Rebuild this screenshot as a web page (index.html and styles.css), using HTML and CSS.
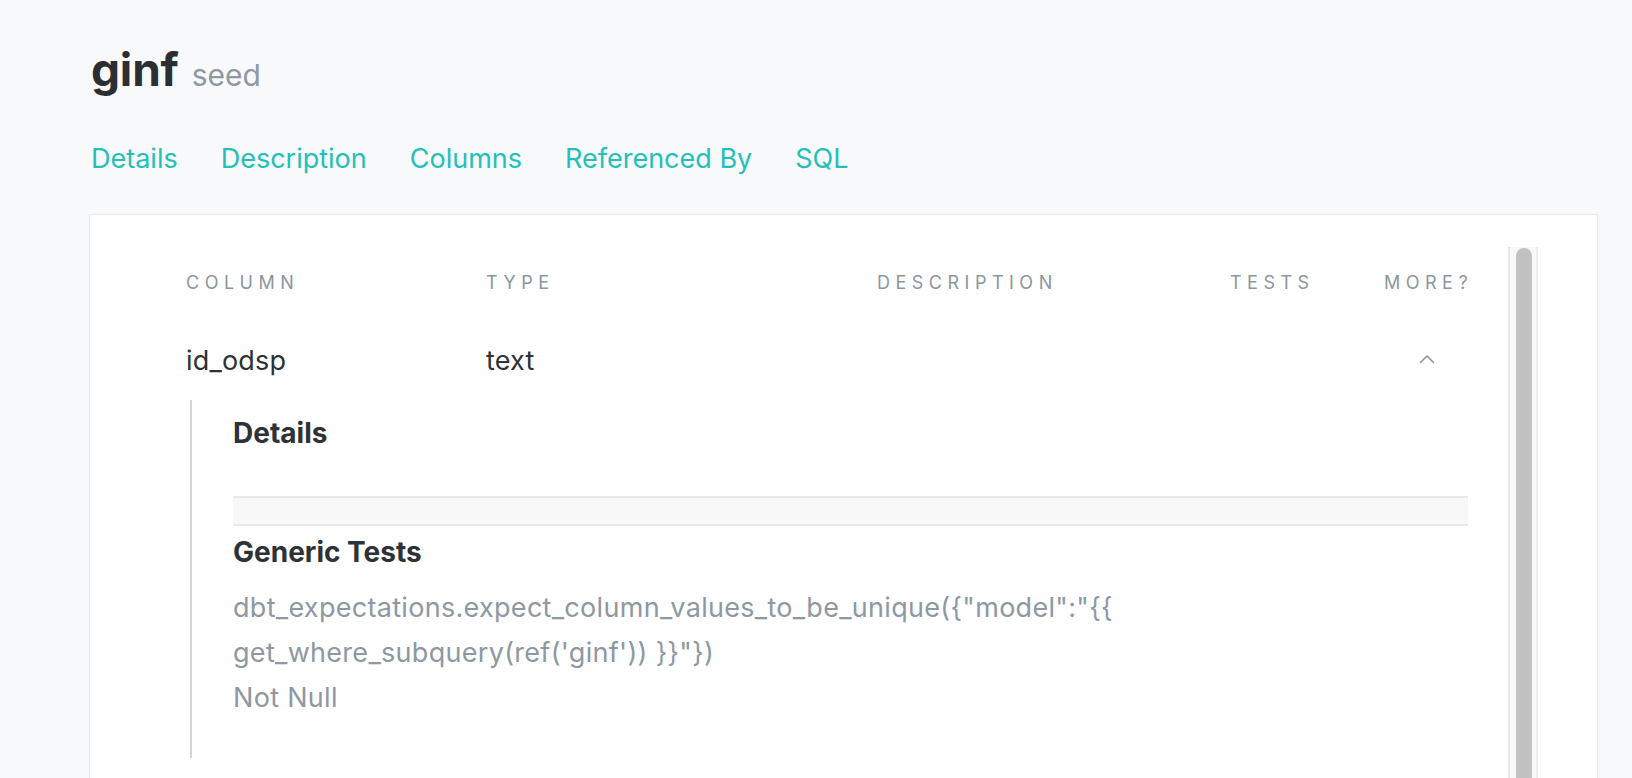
FILE: index.html
```html
<!DOCTYPE html>
<html lang="en">
<head>
<meta charset="utf-8">
<title>ginf seed</title>
<link rel="stylesheet" href="styles.css">
</head>
<body>
<div class="page">
  <h1 class="title"><span class="name">ginf</span><span class="kind">seed</span></h1>
  <nav class="tabs">
    <a class="tab">Details</a>
    <a class="tab">Description</a>
    <a class="tab">Columns</a>
    <a class="tab">Referenced By</a>
    <a class="tab">SQL</a>
  </nav>
  <section class="panel">
    <div class="scroller">
      <div class="table">
        <div class="th">Column</div>
        <div class="th">Type</div>
        <div class="th">Description</div>
        <div class="th">Tests</div>
        <div class="th">More?</div>

        <div class="td">id_odsp</div>
        <div class="td">text</div>
        <div class="td"></div>
        <div class="td"></div>
        <div class="td more">
          <svg class="chev" width="16" height="10" viewBox="0 0 16 10"><polyline points="1.5,8.5 8,2 14.5,8.5" fill="none" stroke="#8a959f" stroke-width="1.6" stroke-linecap="round" stroke-linejoin="round"/></svg>
        </div>

        <div class="expand">
          <h4 class="sub">Details</h4>
          <div class="band"></div>
          <h4 class="sub sub-tests">Generic Tests</h4>
          <div class="tests">
            <div class="test">dbt_expectations.expect_column_values_to_be_unique({"model":"{{ get_where_subquery(ref('ginf')) }}"})</div>
            <div class="test">Not Null</div>
          </div>
        </div>
      </div>
      <div class="scrollbar"><div class="thumb"></div></div>
    </div>
  </section>
</div>
</body>
</html>
```

FILE: styles.css
```css
html, body {
  margin: 0;
  padding: 0;
  height: 100%;
  overflow: hidden;
}
body {
  background: #f8f9fb;
  font-family: Inter, "Noto Sans", "Liberation Sans", sans-serif;
  color: #2e3136;
}
.page {
  padding: 44px 34px 0 89px;
}
.title {
  margin: 0 0 0 2px;
  display: flex;
  align-items: baseline;
  gap: 13px;
  line-height: 50px;
}
.name {
  font-size: 46px;
  font-weight: 700;
  letter-spacing: -0.2px;
  color: #2c2e33;
}
.kind {
  font-size: 30px;
  font-weight: 400;
  color: #8e99a3;
}
.tabs {
  display: flex;
  gap: 43px;
  margin: 39px 0 0 2px;
  font-size: 27px;
  line-height: 40px;
}
.tab {
  color: #25bfba;
  text-decoration: none;
}
.panel {
  margin-top: 35px;
  background: #fff;
  border: 1px solid #e7e9ec;
  border-bottom: none;
  height: 700px;
  padding: 32px 59px 0 0;
}
.scroller {
  display: flex;
  height: 100%;
}
.table {
  flex: 1;
  display: grid;
  grid-template-columns: 300px 391px 353px 154px 86px;
  grid-auto-rows: min-content;
  align-content: start;
  padding: 22px 38px 0 96px;
}
.th {
  font-size: 18px;
  line-height: 27px;
  letter-spacing: 5.5px;
  text-transform: uppercase;
  color: #8b96a0;
  white-space: nowrap;
}
.td {
  margin-top: 45px;
  font-size: 27px;
  line-height: 40px;
  letter-spacing: 0.2px;
  color: #2e3136;
}
.more {
  display: flex;
  justify-content: center;
  align-items: center;
  padding-bottom: 4px;
}
.expand {
  grid-column: 1 / -1;
  margin: 19px 2px 0 4px;
  border-left: 2px solid #d5d5d5;
  padding: 13px 0 38px 41px;
}
.sub {
  margin: 0;
  font-size: 28px;
  font-weight: 700;
  line-height: 40px;
  color: #2e3136;
}
.band {
  margin-top: 43px;
  height: 26px;
  background: #f8f8f8;
  border-top: 2px solid #e8e8e8;
  border-bottom: 2px solid #e8e8e8;
}
.sub-tests {
  margin-top: 6px;
}
.tests {
  margin-top: 13px;
  font-size: 27px;
  line-height: 45px;
  letter-spacing: 0.3px;
  color: #8d98a2;
}
.scrollbar {
  flex: none;
  background: #f8f8f8;
  border-left: 2px solid #e6e6e6;
  border-right: 2px solid #eeeeee;
  padding: 1px 4px 0 6px;
  box-sizing: content-box;
  width: 16px;
}
.thumb {
  height: 100%;
  background: #c1c1c1;
  border-radius: 8px;
}
```
